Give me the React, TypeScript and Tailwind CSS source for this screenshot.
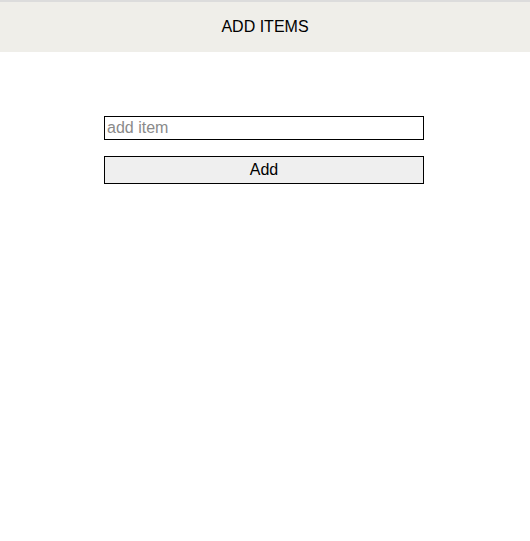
export default function App() {
	return (
		<div className="min-h-[541px] bg-white font-['Liberation_Sans',Arial,sans-serif] text-black">
			<header className="h-[52px] border-t-2 border-[#dcdcdc] bg-[#efeee9] flex items-center justify-center">
				<h1 className="text-base">ADD ITEMS</h1>
			</header>
			<main className="flex flex-col items-center pt-16 pr-[2px] gap-4">
				<input
					type="text"
					placeholder="add item"
					className="w-[320px] h-6 border border-black px-[2px] text-base placeholder:text-[#8a8a8a] outline-none"
				/>
				<button className="w-[320px] h-7 border border-black bg-[#efefef] text-base">
					Add
				</button>
			</main>
		</div>
	);
}
